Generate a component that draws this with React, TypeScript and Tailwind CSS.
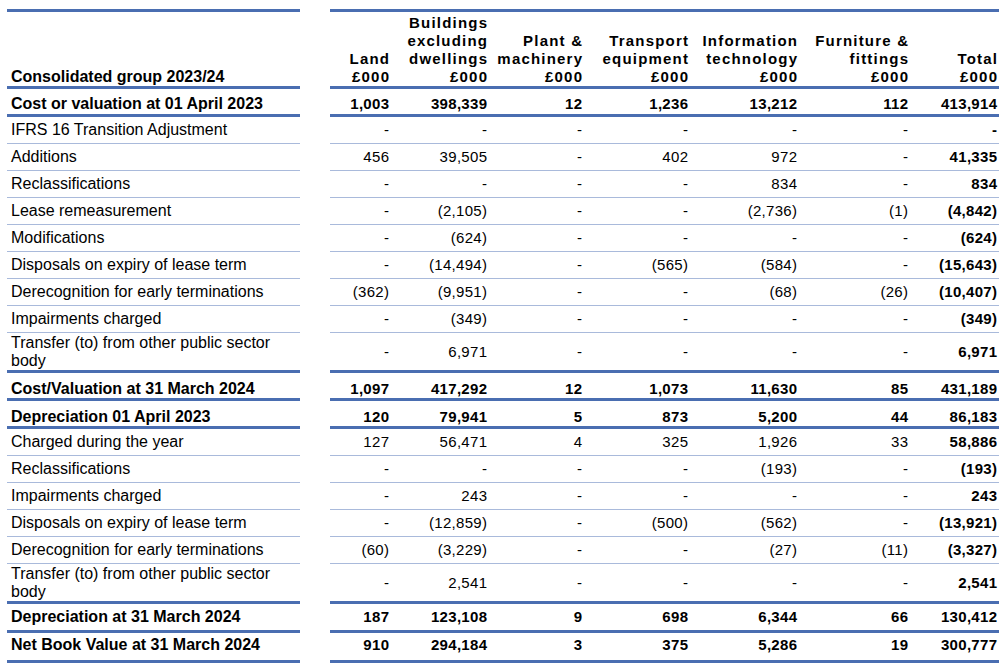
import React from "react"

type Row = {
  label: string
  values: string[]
  bold?: boolean
  thick?: boolean
  // row height and extra padding, read off the reference
  h?: string
  pt?: string
}

const columns = [
  ["Land", "£000"],
  ["Buildings", "excluding", "dwellings", "£000"],
  ["Plant &", "machinery", "£000"],
  ["Transport", "equipment", "£000"],
  ["Information", "technology", "£000"],
  ["Furniture &", "fittings", "£000"],
  ["Total", "£000"],
]

const colWidths = "grid-cols-[59px_98px_95px_106px_109px_111px_89px]"

const rows: Row[] = [
  { label: "Cost or valuation at 01 April 2023", values: ["1,003", "398,339", "12", "1,236", "13,212", "112", "413,914"], bold: true, thick: true, h: "h-[25px]", pt: "pt-[4px]" },
  { label: "IFRS 16 Transition Adjustment", values: ["-", "-", "-", "-", "-", "-", "-"] },
  { label: "Additions", values: ["456", "39,505", "-", "402", "972", "-", "41,335"] },
  { label: "Reclassifications", values: ["-", "-", "-", "-", "834", "-", "834"] },
  { label: "Lease remeasurement", values: ["-", "(2,105)", "-", "-", "(2,736)", "(1)", "(4,842)"] },
  { label: "Modifications", values: ["-", "(624)", "-", "-", "-", "-", "(624)"] },
  { label: "Disposals on expiry of lease term", values: ["-", "(14,494)", "-", "(565)", "(584)", "-", "(15,643)"] },
  { label: "Derecognition for early terminations", values: ["(362)", "(9,951)", "-", "-", "(68)", "(26)", "(10,407)"] },
  { label: "Impairments charged", values: ["-", "(349)", "-", "-", "-", "-", "(349)"] },
  { label: "Transfer (to) from other public sector body", values: ["-", "6,971", "-", "-", "-", "-", "6,971"], thick: true, h: "h-[37px]" },
  { label: "Cost/Valuation at 31 March 2024", values: ["1,097", "417,292", "12", "1,073", "11,630", "85", "431,189"], bold: true, thick: true, h: "h-[25px]", pt: "pt-[7px]" },
  { label: "Depreciation 01 April 2023", values: ["120", "79,941", "5", "873", "5,200", "44", "86,183"], bold: true, thick: true, h: "h-[25px]", pt: "pt-[7px]" },
  { label: "Charged during the year", values: ["127", "56,471", "4", "325", "1,926", "33", "58,886"] },
  { label: "Reclassifications", values: ["-", "-", "-", "-", "(193)", "-", "(193)"] },
  { label: "Impairments charged", values: ["-", "243", "-", "-", "-", "-", "243"] },
  { label: "Disposals on expiry of lease term", values: ["-", "(12,859)", "-", "(500)", "(562)", "-", "(13,921)"] },
  { label: "Derecognition for early terminations", values: ["(60)", "(3,229)", "-", "-", "(27)", "(11)", "(3,327)"] },
  { label: "Transfer (to) from other public sector body", values: ["-", "2,541", "-", "-", "-", "-", "2,541"], thick: true, h: "h-[37px]" },
  { label: "Depreciation at 31 March 2024", values: ["187", "123,108", "9", "698", "6,344", "66", "130,412"], bold: true, thick: true, h: "h-[26px]" },
  { label: "Net Book Value at 31 March 2024", values: ["910", "294,184", "3", "375", "5,286", "19", "300,777"], bold: true, thick: true, h: "h-[27px]", pt: "pb-[3px]" },
]

function TableRow({ row }: { row: Row }) {
  const border = row.thick ? "border-b-[3px] border-[#4a6eb1]" : "border-b border-[#a9badb]"
  const height = row.h ?? "h-[26px]"
  const pad = row.pt ?? ""

  return (
    <div className="flex">
      <div className={`w-[293px] ${border}`}>
        <div className={`${height} ${pad} flex items-center pl-[4px] pr-2 text-[16px] leading-[18px] ${row.bold ? "font-bold" : ""}`}>
          {row.label}
        </div>
      </div>
      <div className={`ml-[30px] w-[669px] pr-[2px] ${border}`}>
        <div className={`${height} ${pad} grid ${colWidths} items-center text-[15px] leading-[18px] tracking-[0.3px]`}>
          {row.values.map((v, i) => (
            <div key={i} className={`text-right -mr-[0.3px] ${row.bold || i === 6 ? "font-bold" : ""}`}>
              {v}
            </div>
          ))}
        </div>
      </div>
    </div>
  )
}

export default function App() {
  return (
    <div className="min-h-screen bg-white pt-[9px] pl-[7px] text-black" style={{ fontFamily: '"Liberation Sans", Arial, sans-serif' }}>
      <div className="flex">
        <div className="w-[293px] border-y-[3px] border-[#4a6eb1]">
          <div className="h-[74px] flex items-end pl-[4px] text-[16px] leading-[18px] font-bold">Consolidated group 2023/24</div>
        </div>
        <div className="ml-[30px] w-[669px] pr-[2px] border-y-[3px] border-[#4a6eb1]">
          <div className={`h-[74px] grid ${colWidths} items-end text-[15px] leading-[18px] font-bold tracking-[1.2px]`}>
            {columns.map((lines, i) => (
              <div key={i} className="text-right -mr-[1.2px]">
                {lines.map((l, j) => (
                  <div key={j}>{l}</div>
                ))}
              </div>
            ))}
          </div>
        </div>
      </div>
      {rows.map((row, i) => (
        <TableRow key={i} row={row} />
      ))}
    </div>
  )
}
